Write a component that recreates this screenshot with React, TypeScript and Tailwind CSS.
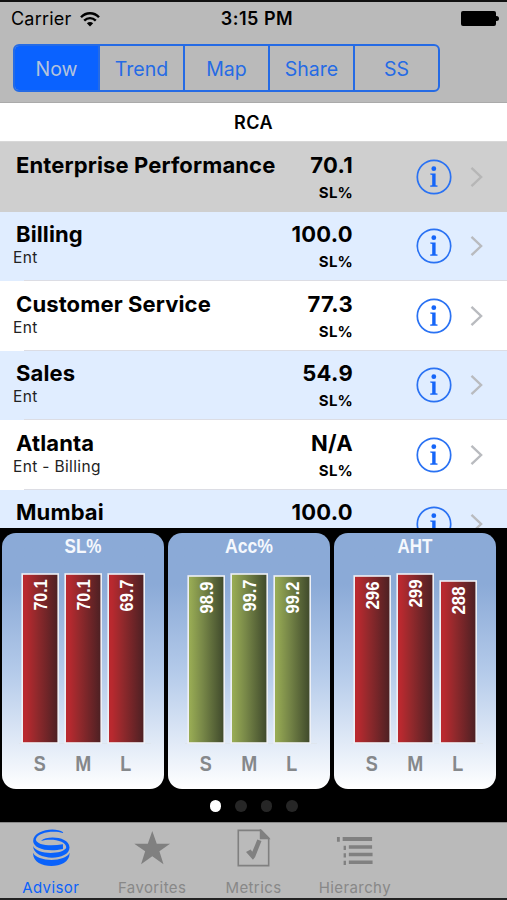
import { useState } from 'react';
import clsx from 'clsx';

const segments = ['Now', 'Trend', 'Map', 'Share', 'SS'];

const rows = [
  { name: 'Enterprise Performance', path: '', value: '70.1' },
  { name: 'Billing', path: 'Ent', value: '100.0' },
  { name: 'Customer Service', path: 'Ent', value: '77.3' },
  { name: 'Sales', path: 'Ent', value: '54.9' },
  { name: 'Atlanta', path: 'Ent - Billing', value: 'N/A' },
  { name: 'Mumbai', path: '', value: '100.0' },
];

type Bar = { label: string; value: string; top: number; length: number };

const charts: { title: string; titleWidth: number; color: string; bars: Bar[] }[] = [
  {
    title: 'SL%',
    titleWidth: 37,
    color: 'red',
    bars: [
      { label: 'S', value: '70.1', top: 41, length: 31 },
      { label: 'M', value: '70.1', top: 41, length: 31 },
      { label: 'L', value: '69.7', top: 41, length: 32 },
    ],
  },
  {
    title: 'Acc%',
    titleWidth: 48,
    color: 'green',
    bars: [
      { label: 'S', value: '98.9', top: 43, length: 32 },
      { label: 'M', value: '99.7', top: 41, length: 32 },
      { label: 'L', value: '99.2', top: 43, length: 32 },
    ],
  },
  {
    title: 'AHT',
    titleWidth: 35,
    color: 'red',
    bars: [
      { label: 'S', value: '296', top: 43, length: 28 },
      { label: 'M', value: '299', top: 41, length: 28 },
      { label: 'L', value: '288', top: 48, length: 28 },
    ],
  },
];

const labelWidths: Record<string, number> = { S: 12, M: 16, L: 11 };

function WifiIcon() {
  return (
    <svg width="20" height="15" viewBox="0 0 20 15" fill="none" stroke="black" strokeWidth="2.4">
      <path d="M1 5.3C6-.1 14-.1 19 5.3" />
      <path d="M4.2 8.7c3.4-3.4 8.2-3.4 11.6 0" />
      <path d="M6.8 11.2c1.9-1.7 4.5-1.7 6.4 0L10 14.6Z" fill="black" stroke="none" />
    </svg>
  );
}

function InfoIcon() {
  return (
    <svg width="36" height="36" viewBox="0 0 36 36" fill="#1565f8" className="shrink-0">
      <circle cx="18" cy="18" r="16.7" fill="none" stroke="#2a72f3" strokeWidth="1.7" />
      <circle cx="17.8" cy="9.7" r="2.4" />
      <path d="M14.2 14.4h5.4v11.8l1.9.4v1.1h-7.300v-1.1l2-.4v-10.300l-2-.4Z" />
    </svg>
  );
}

function Chevron({ faded }: { faded: boolean }) {
  return (
    <svg
      width="14"
      height="22"
      viewBox="0 0 14 22"
      fill="none"
      stroke={faded ? '#b6b6b6' : '#b9bbbf'}
      strokeWidth="2.4"
      className="shrink-0"
    >
      <path d="M1.5 1.8l9.6 9.2-9.6 9.2" />
    </svg>
  );
}

function ChartCard({ title, titleWidth, color, bars }: (typeof charts)[number]) {
  return (
    <div className="h-[256px] w-[162px] overflow-hidden rounded-[14px] bg-gradient-to-b from-[#8baad7] from-20% via-[#b5cbea] via-55% to-white">
      <svg width="162" height="256" viewBox="0 0 162 256" fontFamily="Liberation Sans, Arial, sans-serif" fontWeight="bold">
        <defs>
          <linearGradient id="red">
            <stop offset="0.1" stopColor="#b9292f" />
            <stop offset="0.4" stopColor="#92292c" />
            <stop offset="1" stopColor="#4b2023" />
          </linearGradient>
          <linearGradient id="green">
            <stop offset="0.05" stopColor="#98ab54" />
            <stop offset="0.4" stopColor="#788848" />
            <stop offset="1" stopColor="#3e482b" />
          </linearGradient>
        </defs>
        <text x={81 - titleWidth / 2} y="20" fontSize="19.5" fill="#f5f8fd" textLength={titleWidth} lengthAdjust="spacingAndGlyphs">
          {title}
        </text>
        <path d="M17 210.5h132" stroke="#dfe6ee" />
        {bars.map((bar, i) => {
          const x = 20.2 + i * 43;
          return (
            <g key={bar.label}>
              <rect x={x} y={bar.top} width="36" height={210 - bar.top} fill={`url(#${color})`} stroke="#eef0f5" strokeWidth="1.6" />
              <text
                transform={`translate(${x + 24.8} ${bar.top + 5.5 + bar.length}) rotate(-90)`}
                fontSize="18"
                fill="white"
                textLength={bar.length}
                lengthAdjust="spacingAndGlyphs"
              >
                {bar.value}
              </text>
              <text
                x={x + 17.5 + (bar.label === 'M' ? 0.5 : 0) - labelWidths[bar.label] / 2}
                y="238"
                fontSize="22"
                fill="#85888b"
                textLength={labelWidths[bar.label]}
                lengthAdjust="spacingAndGlyphs"
              >
                {bar.label}
              </text>
            </g>
          );
        })}
      </svg>
    </div>
  );
}

function AdvisorIcon() {
  return (
    <svg width="40" height="40" viewBox="0 0 40 40" fill="#0a62fb">
      <path d="M32.5 4.300C24 1.200 5.500 3 4 11 5 17 19 18.500 32.600 16v5C16 24.500 1.500 20.500 1.200 12.500 1.500 1 24-2.500 32.800 3.300Z" />
      <path d="M9.500 12.500C16 6.500 39.200 8 39.500 19.500 39.500 34 1.200 34 1.200 18 5 27.500 32 27 36 20 37 11.500 19 9.500 9.500 12.500Z" />
      <path d="M1.200 25C5 35 36 35 39.500 25 41 43.500-.300 43.500 1.200 25Z" />
    </svg>
  );
}

function StarIcon() {
  return (
    <svg width="40" height="40" viewBox="0 0 40 40" fill="#808080">
      <path d="M20.300 2l4.700 13.500H39L27.800 23.500l4.300 13.500L20.300 28.800 8.500 37l4.300-13.500L1.300 15.500h14.300Z" />
    </svg>
  );
}

function MetricsIcon() {
  return (
    <svg width="40" height="40" viewBox="0 0 40 40" fill="none" stroke="#808080" strokeWidth="1.700">
      <path d="M4.500 1.500h24l8 8v29h-32Z" />
      <path d="M28 1.500v8.500h8.500Z" fill="#808080" />
      <path d="M14 24.500l3.300-1.800 2.200 3L25 12.200l2.800.9L21.500 29l-1.600 2Z" fill="#808080" />
    </svg>
  );
}

function HierarchyIcon() {
  return (
    <svg width="40" height="40" viewBox="0 0 40 40" fill="#808080">
      <path d="M1 8.500h3v5H1zM7 8.500h31v4.200H7zM8 17.500h2.500V22H8zM13.500 17H38v3.700H13.500zM8 25.500h2.500V30H8zM13.500 25h25v3.700h-25zM8 33.500h2.500V38H8zM13.500 33.200h25v3.700h-25z" />
    </svg>
  );
}

const tabs = [
  { label: 'Advisor', icon: <AdvisorIcon /> },
  { label: 'Favorites', icon: <StarIcon /> },
  { label: 'Metrics', icon: <MetricsIcon /> },
  { label: 'Hierarchy', icon: <HierarchyIcon /> },
];

export default function App() {
  const [segment, setSegment] = useState('Now');
  const [page, setPage] = useState(0);

  return (
    <div className="flex h-[900px] w-[507px] flex-col overflow-hidden bg-black font-['Inter',sans-serif] text-black">
      <header className="h-[103px] shrink-0 border-t-2 border-b border-t-[#111] border-b-[#aaa] bg-[#bababa]">
        <div className="grid h-[42px] grid-cols-3 items-center pr-2 pb-2 pl-[11px] text-[18px] leading-8">
          <div className="flex items-center gap-[9px] tracking-[0.2px]">
            Carrier
            <WifiIcon />
          </div>
          <div className="pl-1 text-center font-semibold tracking-[0.5px]">3:15 PM</div>
          <div className="flex items-center justify-end pb-px">
            <span className="h-[15px] w-[35px] rounded-[2px] bg-black" />
            <span className="h-[5px] w-[3px] rounded-r-full bg-black" />
          </div>
        </div>
        <div className="ml-[13px] flex h-[48px] w-[427px] overflow-hidden rounded-md border-2 border-[#256be5]">
          {segments.map((s) => (
            <button
              key={s}
              onClick={() => setSegment(s)}
              className={clsx(
                'flex-1 border-l-2 border-[#256be5] pt-[3px] text-[19.5px] first:border-l-0',
                s === segment ? 'bg-[#0a62ff] text-[#b3c3dc]' : 'text-[#256be5]',
              )}
            >
              {s}
            </button>
          ))}
        </div>
      </header>

      <h1 className="flex h-[39px] shrink-0 items-center justify-center border-b border-[#d8d8d8] bg-white pt-px text-[18px] font-semibold tracking-[0.5px]">
        RCA
      </h1>

      <main className="h-[386px] shrink-0 overflow-hidden bg-white">
        {rows.map((row, i) => (
          <div
            key={row.name}
            className={clsx(
              'flex h-[69.5px] pl-4',
              i === 0 ? 'bg-[#cfcfcf]' : i % 2 ? 'bg-[#e0edff]' : 'bg-white',
            )}
          >
            <div className="w-2 shrink-0 pt-[8.5px]">
              <div className="text-[22px] leading-7 font-[650] tracking-[0.12px] whitespace-nowrap">{row.name}</div>
              {row.path && (
                <div className="-ml-[3px] text-[15.5px] leading-[19px] tracking-[0.35px] whitespace-nowrap text-[#222]">{row.path}</div>
              )}
            </div>
            <div className={clsx('flex flex-1', i > 0 && 'border-b border-[#dcdde4]')}>
              <div className="w-[329px] pt-[8.5px] text-right font-[650]">
                <div className="text-[22px] leading-7 tracking-[0.3px]">{row.value}</div>
                <div className="pt-0.5 text-[15px] leading-6 tracking-[0.2px]">SL%</div>
              </div>
              <div className="flex flex-1 items-center gap-[18px] pt-px pl-[63px]">
                <InfoIcon />
                <Chevron faded={i === 0} />
              </div>
            </div>
          </div>
        ))}
      </main>

      <section className="h-[294px] shrink-0 bg-black pt-[5px] pl-0.5">
        <div className="flex gap-1">
          {charts.map((chart) => (
            <ChartCard key={chart.title} {...chart} />
          ))}
        </div>
        <div className="flex justify-center gap-[14px] pt-[11px] pr-[1.5px]">
          {[0, 1, 2, 3].map((n) => (
            <button
              key={n}
              onClick={() => setPage(n)}
              className={clsx('size-[11.5px] rounded-full', n === page ? 'bg-white' : 'bg-[#262626]')}
            />
          ))}
        </div>
      </section>

      <nav className="flex h-[78px] shrink-0 border-t border-b-2 border-t-[#8a8a8a] border-b-[#222] bg-[#bababa]">
        {tabs.map((tab, i) => (
          <div
            key={tab.label}
            className={clsx(
              'flex w-[101.4px] flex-col items-center pt-1.5 text-[15px] tracking-[0.4px]',
              i === 0 ? 'text-[#0a62fb]' : 'text-[#888]',
            )}
          >
            {tab.icon}
            <span className="mt-2.5 leading-[21px]">{tab.label}</span>
          </div>
        ))}
      </nav>
    </div>
  );
}
